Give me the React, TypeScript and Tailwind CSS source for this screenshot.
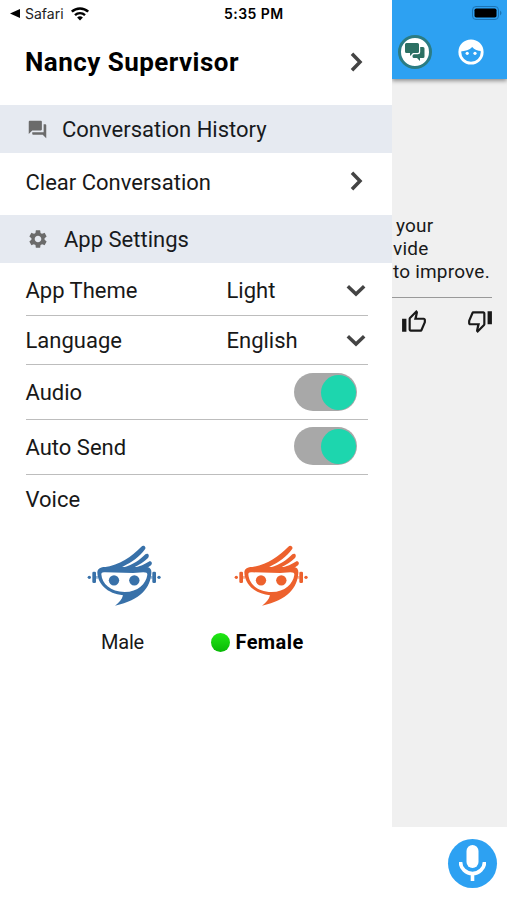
import type { ReactNode } from "react";
import {
  MdForum,
  MdOutlineThumbDown,
  MdOutlineThumbUp,
  MdSettings,
} from "react-icons/md";

function Chevron({ down = false }: { down?: boolean }) {
  return down ? (
    <svg className="h-[13px] w-5 shrink-0" viewBox="0 0 20 13" fill="none">
      <path d="M1.8 2.2 10 10 18.2 2.2" stroke="#444" strokeWidth="3.5" />
    </svg>
  ) : (
    <svg className="h-5 w-[13px] shrink-0" viewBox="0 0 13 20" fill="none">
      <path d="M2 1.8 10 10 2 18.2" stroke="#444" strokeWidth="3.5" />
    </svg>
  );
}

function WifiIcon() {
  return (
    <svg className="h-[15px] w-5" viewBox="0 0 20 15" fill="none">
      <path d="M1.8 5.7a11.8 11.8 0 0 1 16.4 0" stroke="#000" strokeWidth="2.5" />
      <path d="M5 9.1a7.2 7.2 0 0 1 10 0" stroke="#000" strokeWidth="2.4" />
      <path d="M10 14.5 7.1 11.6a4.1 4.1 0 0 1 5.800 0Z" fill="#000" />
    </svg>
  );
}

function FaceIcon() {
  return (
    <svg className="ml-[26px] size-[26px]" viewBox="0 0 26 26" fill="#fff">
      <circle cx="13" cy="13" r="11.2" fill="none" stroke="#fff" strokeWidth="2.8" />
      <path d="M2 12C2 5.500 7 1.500 13 1.500S24 5.500 24.500 12C20 12.200 16.500 10.800 14.200 8 11.500 11 7.500 12 2 12.500Z" />
      <circle cx="9.200" cy="14.300" r="1.600" />
      <circle cx="17" cy="14.300" r="1.600" />
    </svg>
  );
}

function Mascot({ color }: { color: string }) {
  return (
    <svg className="h-20 w-[90px]" viewBox="0 0 270 240" fill={color}>
      {/* hair */}
      <path d="M72 97C120 89 153 66 184 35C191 28 200 36 195 43C178 65 158 81 128 95L110 101Z" />
      <path d="M132 97C158 89 180 75 196 58C204 53 210 61 204 69C192 81 178 90 160 98Z" />
      <path d="M163 98C180 94 194 87 206 80C214 76 219 85 213 91L201 99Z" />
      {/* face and speech tail */}
      <path
        fillRule="evenodd"
        d="M52 112C53 100 62 96 76 96L200 96C211 97 215 104 214 115C211 157 183 196 105 212C118 202 126 194 129 181C82 176 53 148 52 112ZM64 118C66 147 91 170 134 171C174 170 198 147 202 119C202 114 199 112 190 112L159 114L76 112C67 111 64 113 64 118Z"
      />
      <circle cx="102" cy="136" r="15.500" />
      <circle cx="163" cy="136" r="15.500" />
      {/* headphones */}
      <rect x="37" y="110" width="11" height="34" rx="4" />
      <rect x="217" y="110" width="11" height="34" rx="4" />
      <path d="M46 123h8v8h-8zM211 123h7v8h-7z" opacity=".5" />
      <circle cx="28" cy="127" r="5" />
      <circle cx="237" cy="127" r="5" />
    </svg>
  );
}

function SectionHeader({ icon, children }: { icon: ReactNode; children: ReactNode }) {
  return (
    <div className="flex h-12 items-center bg-[#e6eaf1] pl-[27px] text-[22px] text-[#181a1d]">
      {icon}
      {children}
    </div>
  );
}

function SelectRow({ label, value }: { label: string; value: string }) {
  return (
    <>
      <span className="w-[201px]">{label}</span>
      <span className="flex-1">{value}</span>
      <Chevron down />
    </>
  );
}

function Toggle() {
  return (
    <button className="mr-[9px] flex h-[38px] w-[63px] items-center justify-end rounded-full bg-[#a8a8a8] pr-px">
      <span className="size-[35px] rounded-full bg-[#1dd6ae]" />
    </button>
  );
}

function Drawer() {
  return (
    <aside className="flex w-[392px] shrink-0 flex-col bg-white">
      <div className="flex h-[27px] items-center pl-[10px] text-[14px] text-[#222]">
        <svg className="mr-[5px] h-[9px] w-[10px]" viewBox="0 0 10 9">
          <path d="M0 4.5 10 0v9Z" fill="#000" />
        </svg>
        <span className="w-[45px] font-['Inter',sans-serif]">Safari</span>
        <span className="-mt-px">
          <WifiIcon />
        </span>
        <span className="ml-[134px] whitespace-nowrap font-['Inter',sans-serif] font-semibold tracking-[0.45px] text-black">
          5:35 PM
        </span>
      </div>

      <div className="flex h-[78px] items-center justify-between pb-2 pl-[25px] pr-[29px]">
        <h1 className="text-[26px] font-bold tracking-[0.46px] text-black">Nancy Supervisor</h1>
        <Chevron />
      </div>

      <SectionHeader icon={<MdForum className="mr-[14px] size-[21px] text-[#6b6b6b]" />}>
        Conversation History
      </SectionHeader>
      <div className="flex h-[62px] items-center justify-between pb-1 pl-[25.5px] pr-[29px] text-[22px]">
        <span>Clear Conversation</span>
        <span className="pb-[3px]">
          <Chevron />
        </span>
      </div>

      <SectionHeader icon={<MdSettings className="mr-[15px] size-[22px] text-[#6b6b6b]" />}>
        App Settings
      </SectionHeader>
      <div className="ml-[25.5px] w-[342px] text-[22px]">
        <div className="flex h-[53px] items-center border-b border-[#bdbdbd] pr-0.5 pt-0.5">
          <SelectRow label="App Theme" value="Light" />
        </div>
        <div className="flex h-[49px] items-center border-b border-[#bdbdbd] pr-0.5">
          <SelectRow label="Language" value="English" />
        </div>
        <div className="flex h-[55px] items-center justify-between border-b border-[#bdbdbd] pr-0.5">
          <span>Audio</span>
          <Toggle />
        </div>
        <div className="flex h-[55px] items-center justify-between border-b border-[#bdbdbd] pr-0.5">
          <span>Auto Send</span>
          <span className="pb-0.5">
            <Toggle />
          </span>
        </div>
        <div className="flex h-[49px] items-center">Voice</div>
      </div>

      <div className="mt-[11px] flex pl-20 text-xl">
        <div className="flex w-[146.5px] flex-col">
          <Mascot color="#3871a9" />
          <span className="ml-[21px] mt-[13px] tracking-[-0.2px]">Male</span>
        </div>
        <div className="flex flex-col">
          <Mascot color="#ed612d" />
          <span className="-ml-4 mt-[13px] flex items-center gap-1.5 font-bold tracking-[0.4px] text-black">
            <span className="size-[19px] rounded-full bg-linear-to-b from-[#20e914] to-[#08b807]" />
            Female
          </span>
        </div>
      </div>
    </aside>
  );
}

function ChatPanel() {
  return (
    <main className="flex w-[115px] flex-col overflow-hidden bg-[#f0f0f0]">
      <header className="flex h-[79px] shrink-0 flex-col bg-[#2da1f2] shadow-[0_2px_4px_rgba(0,0,0,0.4)]">
        <div className="flex h-[26px] items-center justify-end pr-1">
          <svg className="h-[14px] w-[31px]" viewBox="0 0 31 14">
            <rect x=".5" y=".5" width="26" height="13" rx="3.5" fill="none" stroke="#1c74b5" />
            <rect x="2.5" y="2.5" width="22" height="9" rx="1.8" />
            <path d="M28 4.5q3 2.5 0 5Z" fill="#1c74b5" />
          </svg>
        </div>
        <div className="flex h-[52px] items-center">
          <div className="ml-[6px] flex size-[34px] shrink-0 items-center justify-center rounded-full border-[3px] border-[#2b7c83] bg-white">
            <svg className="h-[18px] w-5" viewBox="0 0 20 18" fill="#2c7063">
              <path d="M1.5 0h11Q14 0 14 1.500v7Q14 10 12.500 10H8l-3 3v-3H1.500Q0 10 0 8.500v-7Q0 0 1.500 0Z" />
              <path d="M15.200 4H18q1.500 0 1.500 1.500v8q0 1.500-1.500 1.500h-3v3l-3-3H9q-1.500 0-1.500-1.500v-1L8.700 11.200h4q2.500 0 2.500-2.500Z" />
            </svg>
          </div>
          <FaceIcon />
        </div>
      </header>

      <div className="h-[748px] shrink-0 pt-[135px] text-[#191919]">
        <p className="whitespace-nowrap text-[19px] leading-[23px] tracking-[0.2px]">
          <span className="block pl-1">your</span>
          <span className="block pl-px">vide</span>
          <span className="block pl-px">to improve.</span>
        </p>
        <div className="mr-[15px] mt-[14px] flex justify-between border-t border-[#999] pl-[9px] pt-[11px]">
          <MdOutlineThumbUp className="size-[26px]" />
          <MdOutlineThumbDown className="-mr-px -mt-px size-[26px]" />
        </div>
      </div>

      <footer className="flex flex-1 items-start justify-end bg-white pr-[10px] pt-3">
        <button className="flex size-[49px] items-center justify-center rounded-full bg-[#2da1f2]">
          <svg className="h-[37px] w-[27px]" viewBox="0 0 27 37" fill="none">
            <rect x="7.500" y="0" width="12" height="23" rx="6" fill="#fff" />
            <path d="M1.500 17a12 11.500 0 0 0 24 0M13.500 28v8" stroke="#fff" strokeWidth="3.600" />
          </svg>
        </button>
      </footer>
    </main>
  );
}

export default function App() {
  return (
    <div className="flex h-[900px] w-[507px] overflow-hidden bg-white font-['Roboto',sans-serif] text-[#181818]">
      <Drawer />
      <ChatPanel />
    </div>
  );
}
